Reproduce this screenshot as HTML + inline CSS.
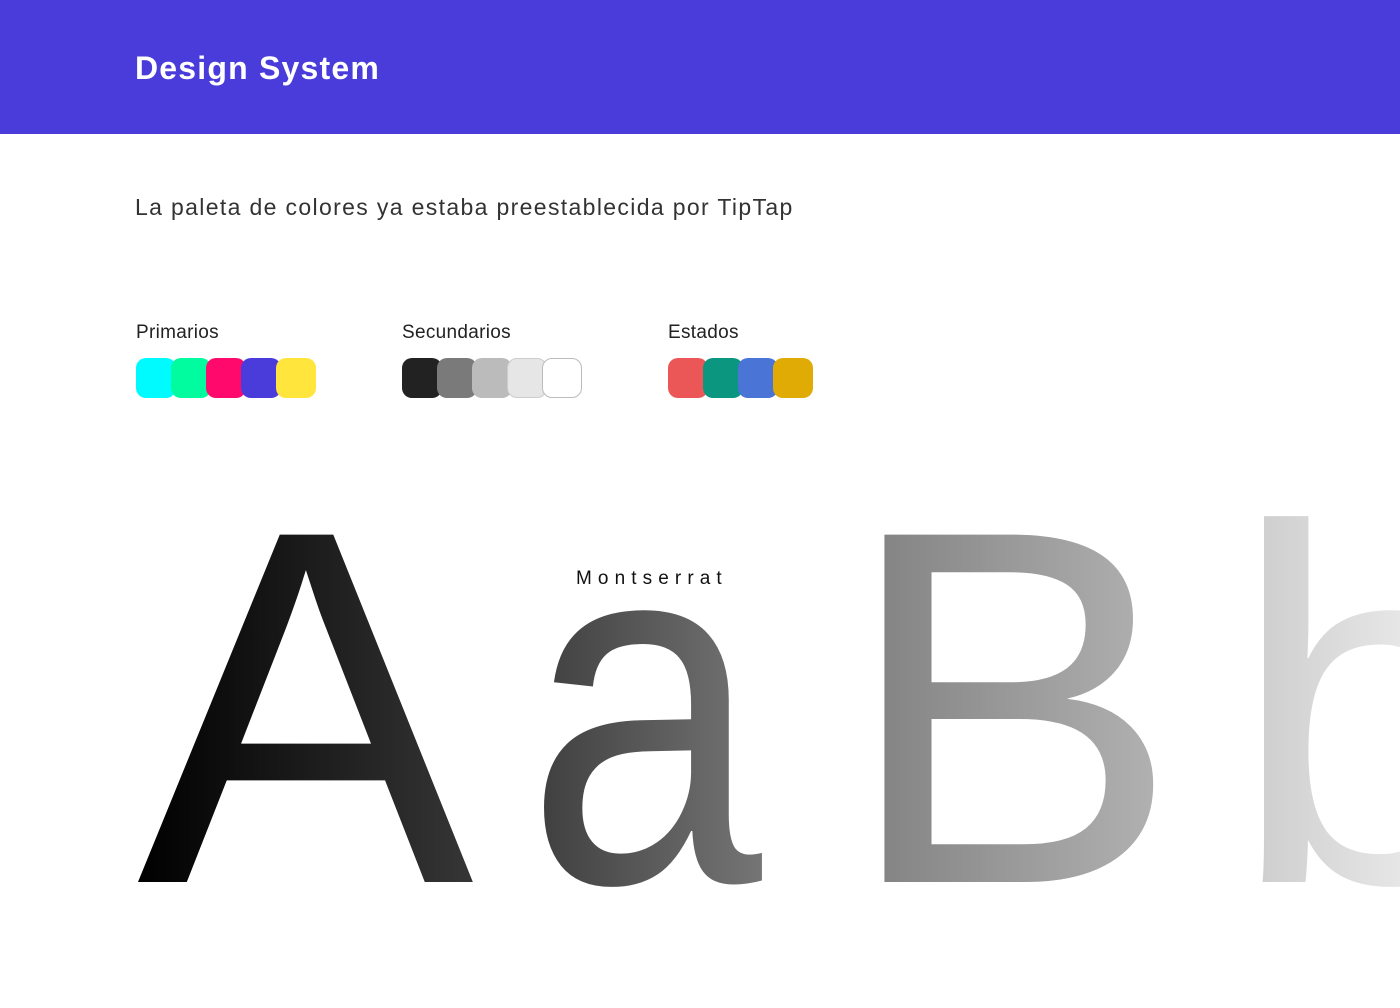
<!DOCTYPE html>
<html><head><meta charset="utf-8">
<style>
html,body{margin:0;padding:0;}
body{width:1400px;height:1008px;position:relative;overflow:hidden;background:#fff;font-family:"Liberation Sans",sans-serif;}
.hdr{position:absolute;left:0;top:0;width:1400px;height:134px;background:#4a3cdb;}
.title{position:absolute;left:135px;top:48px;font-size:32px;font-weight:bold;color:#fff;line-height:40px;letter-spacing:1.2px;}
.sub{position:absolute;left:135px;top:192px;font-size:23px;color:#333;line-height:30px;letter-spacing:1.35px;}
.lbl{position:absolute;top:321px;font-size:19px;color:#222;line-height:24px;letter-spacing:0.3px;}
.sw{position:absolute;top:358px;width:40px;height:40px;border-radius:10px;box-sizing:border-box;}
.big{position:absolute;top:463px;font-size:505px;line-height:490px;color:transparent;
 background:linear-gradient(90deg,#000 0px,#000 137px,#3a3a3a 500px,#777 800px,#b0b0b0 1150px,#cfcfcf 1263px,#e6e6e6 1400px);
 background-size:1400px 100%;-webkit-background-clip:text;background-clip:text;}
.mont{position:absolute;left:576px;top:567px;font-size:19px;letter-spacing:6.1px;color:#111;line-height:24px;}
</style></head><body>
<div class="hdr"></div>
<div class="title">Design System</div>
<div class="sub">La paleta de colores ya estaba preestablecida por TipTap</div>

<div class="lbl" style="left:136px">Primarios</div>
<div class="lbl" style="left:402px">Secundarios</div>
<div class="lbl" style="left:668px">Estados</div>

<div class="sw" style="left:136px;background:#00fbff"></div>
<div class="sw" style="left:171px;background:#00fc9f"></div>
<div class="sw" style="left:206px;background:#ff0a6c"></div>
<div class="sw" style="left:241px;background:#4a3cdb"></div>
<div class="sw" style="left:276px;background:#ffe53c"></div>

<div class="sw" style="left:402px;background:#222"></div>
<div class="sw" style="left:437px;background:#7a7a7a"></div>
<div class="sw" style="left:472px;background:#bbb"></div>
<div class="sw" style="left:507px;background:#e6e6e6;border:1px solid #ccc"></div>
<div class="sw" style="left:542px;background:#fff;border:1px solid #bbb"></div>

<div class="sw" style="left:668px;background:#eb5757"></div>
<div class="sw" style="left:703px;background:#0b9680"></div>
<div class="sw" style="left:738px;background:#4a74d6"></div>
<div class="sw" style="left:773px;background:#e0ab05"></div>

<div class="big" style="left:0;padding-left:137px;width:1263px;">A</div>
<div class="big" style="left:526px;width:290px;transform:scaleX(0.84);transform-origin:0 0;background:linear-gradient(90deg,#3c3c3c,#777);-webkit-background-clip:text;background-clip:text;">a</div>
<div class="big" style="left:0;padding-left:843px;width:557px;">B</div>
<div class="big" style="left:0;padding-left:1230px;width:170px;white-space:nowrap;overflow:hidden;">b</div>
<div class="mont">Montserrat</div>
</body></html>
